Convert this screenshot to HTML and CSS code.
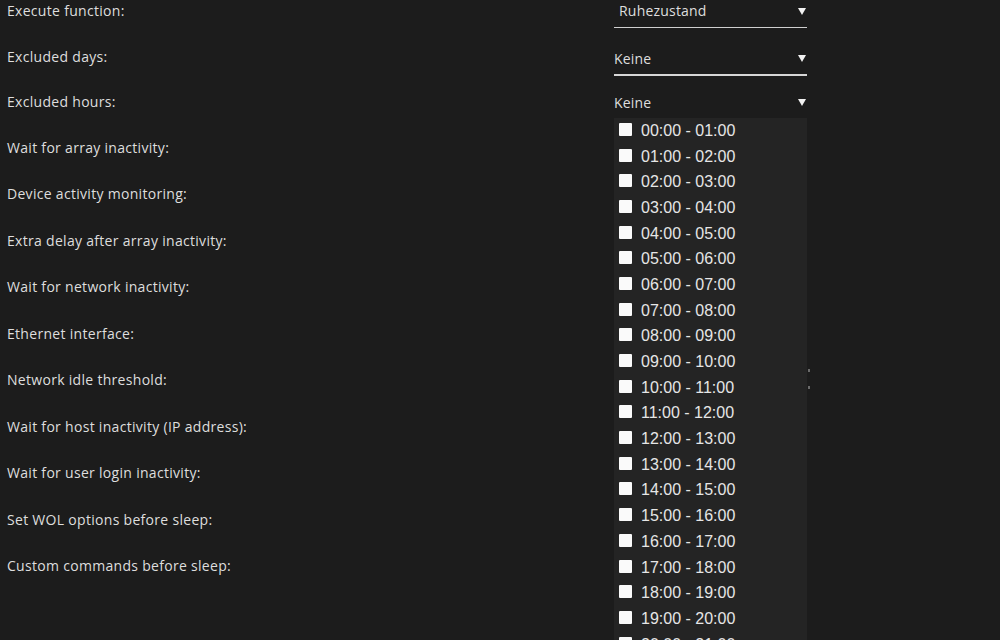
FILE: index.html
```html
<!DOCTYPE html>
<html lang="en">
    <head>
        <meta charset="UTF-8">
        <title>Sleep settings</title>
        <link rel="stylesheet" href="styles.css">
    </head>

    <body>
        <div class="settings">
            <div class="row short">
                <span class="label">Execute function:</span>
                <div class="select first">
                    <span>Ruhezustand</span>
                    <i class="arrow"></i>
                </div>
            </div>
            <div class="row short">
                <span class="label">Excluded days:</span>
                <div class="select focus">
                    <span>Keine</span>
                    <i class="arrow"></i>
                </div>
            </div>
            <div class="row short">
                <span class="label">Excluded hours:</span>
                <div class="select open">
                    <span>Keine</span>
                    <i class="arrow"></i>
                    <ul class="options">
                        <li><b></b>00:00 - 01:00</li>
                        <li><b></b>01:00 - 02:00</li>
                        <li><b></b>02:00 - 03:00</li>
                        <li><b></b>03:00 - 04:00</li>
                        <li><b></b>04:00 - 05:00</li>
                        <li><b></b>05:00 - 06:00</li>
                        <li><b></b>06:00 - 07:00</li>
                        <li><b></b>07:00 - 08:00</li>
                        <li><b></b>08:00 - 09:00</li>
                        <li><b></b>09:00 - 10:00</li>
                        <li><b></b>10:00 - 11:00</li>
                        <li><b></b>11:00 - 12:00</li>
                        <li><b></b>12:00 - 13:00</li>
                        <li><b></b>13:00 - 14:00</li>
                        <li><b></b>14:00 - 15:00</li>
                        <li><b></b>15:00 - 16:00</li>
                        <li><b></b>16:00 - 17:00</li>
                        <li><b></b>17:00 - 18:00</li>
                        <li><b></b>18:00 - 19:00</li>
                        <li><b></b>19:00 - 20:00</li>
                        <li><b></b>20:00 - 21:00</li>
                    </ul>
                </div>
            </div>
            <div class="row"><span class="label">Wait for array inactivity:</span></div>
            <div class="row"><span class="label">Device activity monitoring:</span></div>
            <div class="row"><span class="label">Extra delay after array inactivity:</span></div>
            <div class="row"><span class="label">Wait for network inactivity:</span></div>
            <div class="row"><span class="label">Ethernet interface:</span></div>
            <div class="row"><span class="label">Network idle threshold:</span><span class="marks"></span></div>
            <div class="row"><span class="label">Wait for host inactivity (IP address):</span></div>
            <div class="row"><span class="label">Wait for user login inactivity:</span></div>
            <div class="row"><span class="label">Set WOL options before sleep:</span></div>
            <div class="row"><span class="label">Custom commands before sleep:</span></div>
        </div>
    </body>

</html>
```

FILE: styles.css
```css
* {
    margin: 0;
    padding: 0;
    box-sizing: border-box;
}

body {
    background: #1c1c1c;
    color: #dedede;
    font-family: 'Open Sans', sans-serif;
    font-size: 14px;
    letter-spacing: 0.3px;
    overflow: hidden;
    height: 640px;
}

.settings {
    padding-left: 7px;
}

.row {
    display: grid;
    grid-template-columns: 607px 193px;
    height: 46.5px;
    line-height: 22px;

    &.short {
        height: 45.5px;
    }
}

.select {
    position: relative;
    display: flex;
    justify-content: space-between;
    align-items: center;
    height: 28px;
    padding-bottom: 5px;
    border-bottom: 1px solid #cfcfcf;
    letter-spacing: 0.2px;

    &.first {
        padding-left: 5px;
    }

    &.focus {
        height: 29px;
        margin-top: 1px;
        padding-bottom: 3px;
        border-bottom: 2px solid #d6d6d6;
    }

    &.open {
        border-bottom: none;
    }

    & .arrow {
        width: 0;
        height: 0;
        margin-right: 1px;
        border-left: 4px solid transparent;
        border-right: 4px solid transparent;
        border-top: 7px solid #f2f2f2;
    }
}

.options {
    position: absolute;
    top: 27px;
    left: 0;
    width: 193px;
    list-style: none;
    background: #242424;
    font-family: 'Liberation Sans', Arial, sans-serif;
    font-size: 16px;
    letter-spacing: 0;
    color: #e6e6e6;
    z-index: 1;

    & li {
        display: flex;
        align-items: center;
        height: 25.7px;
        padding-left: 5px;
    }

    & b {
        width: 13px;
        height: 13px;
        margin: -3px 9px 0 0;
        background: #fafafa;
        border-radius: 1px;
    }
}

.marks {
    position: relative;

    &::before,
    &::after {
        content: '';
        position: absolute;
        left: 194px;
        width: 2px;
        height: 3px;
        background: #6a6a6a;
    }

    &::before {
        top: 0;
    }

    &::after {
        top: 17px;
    }
}
```
